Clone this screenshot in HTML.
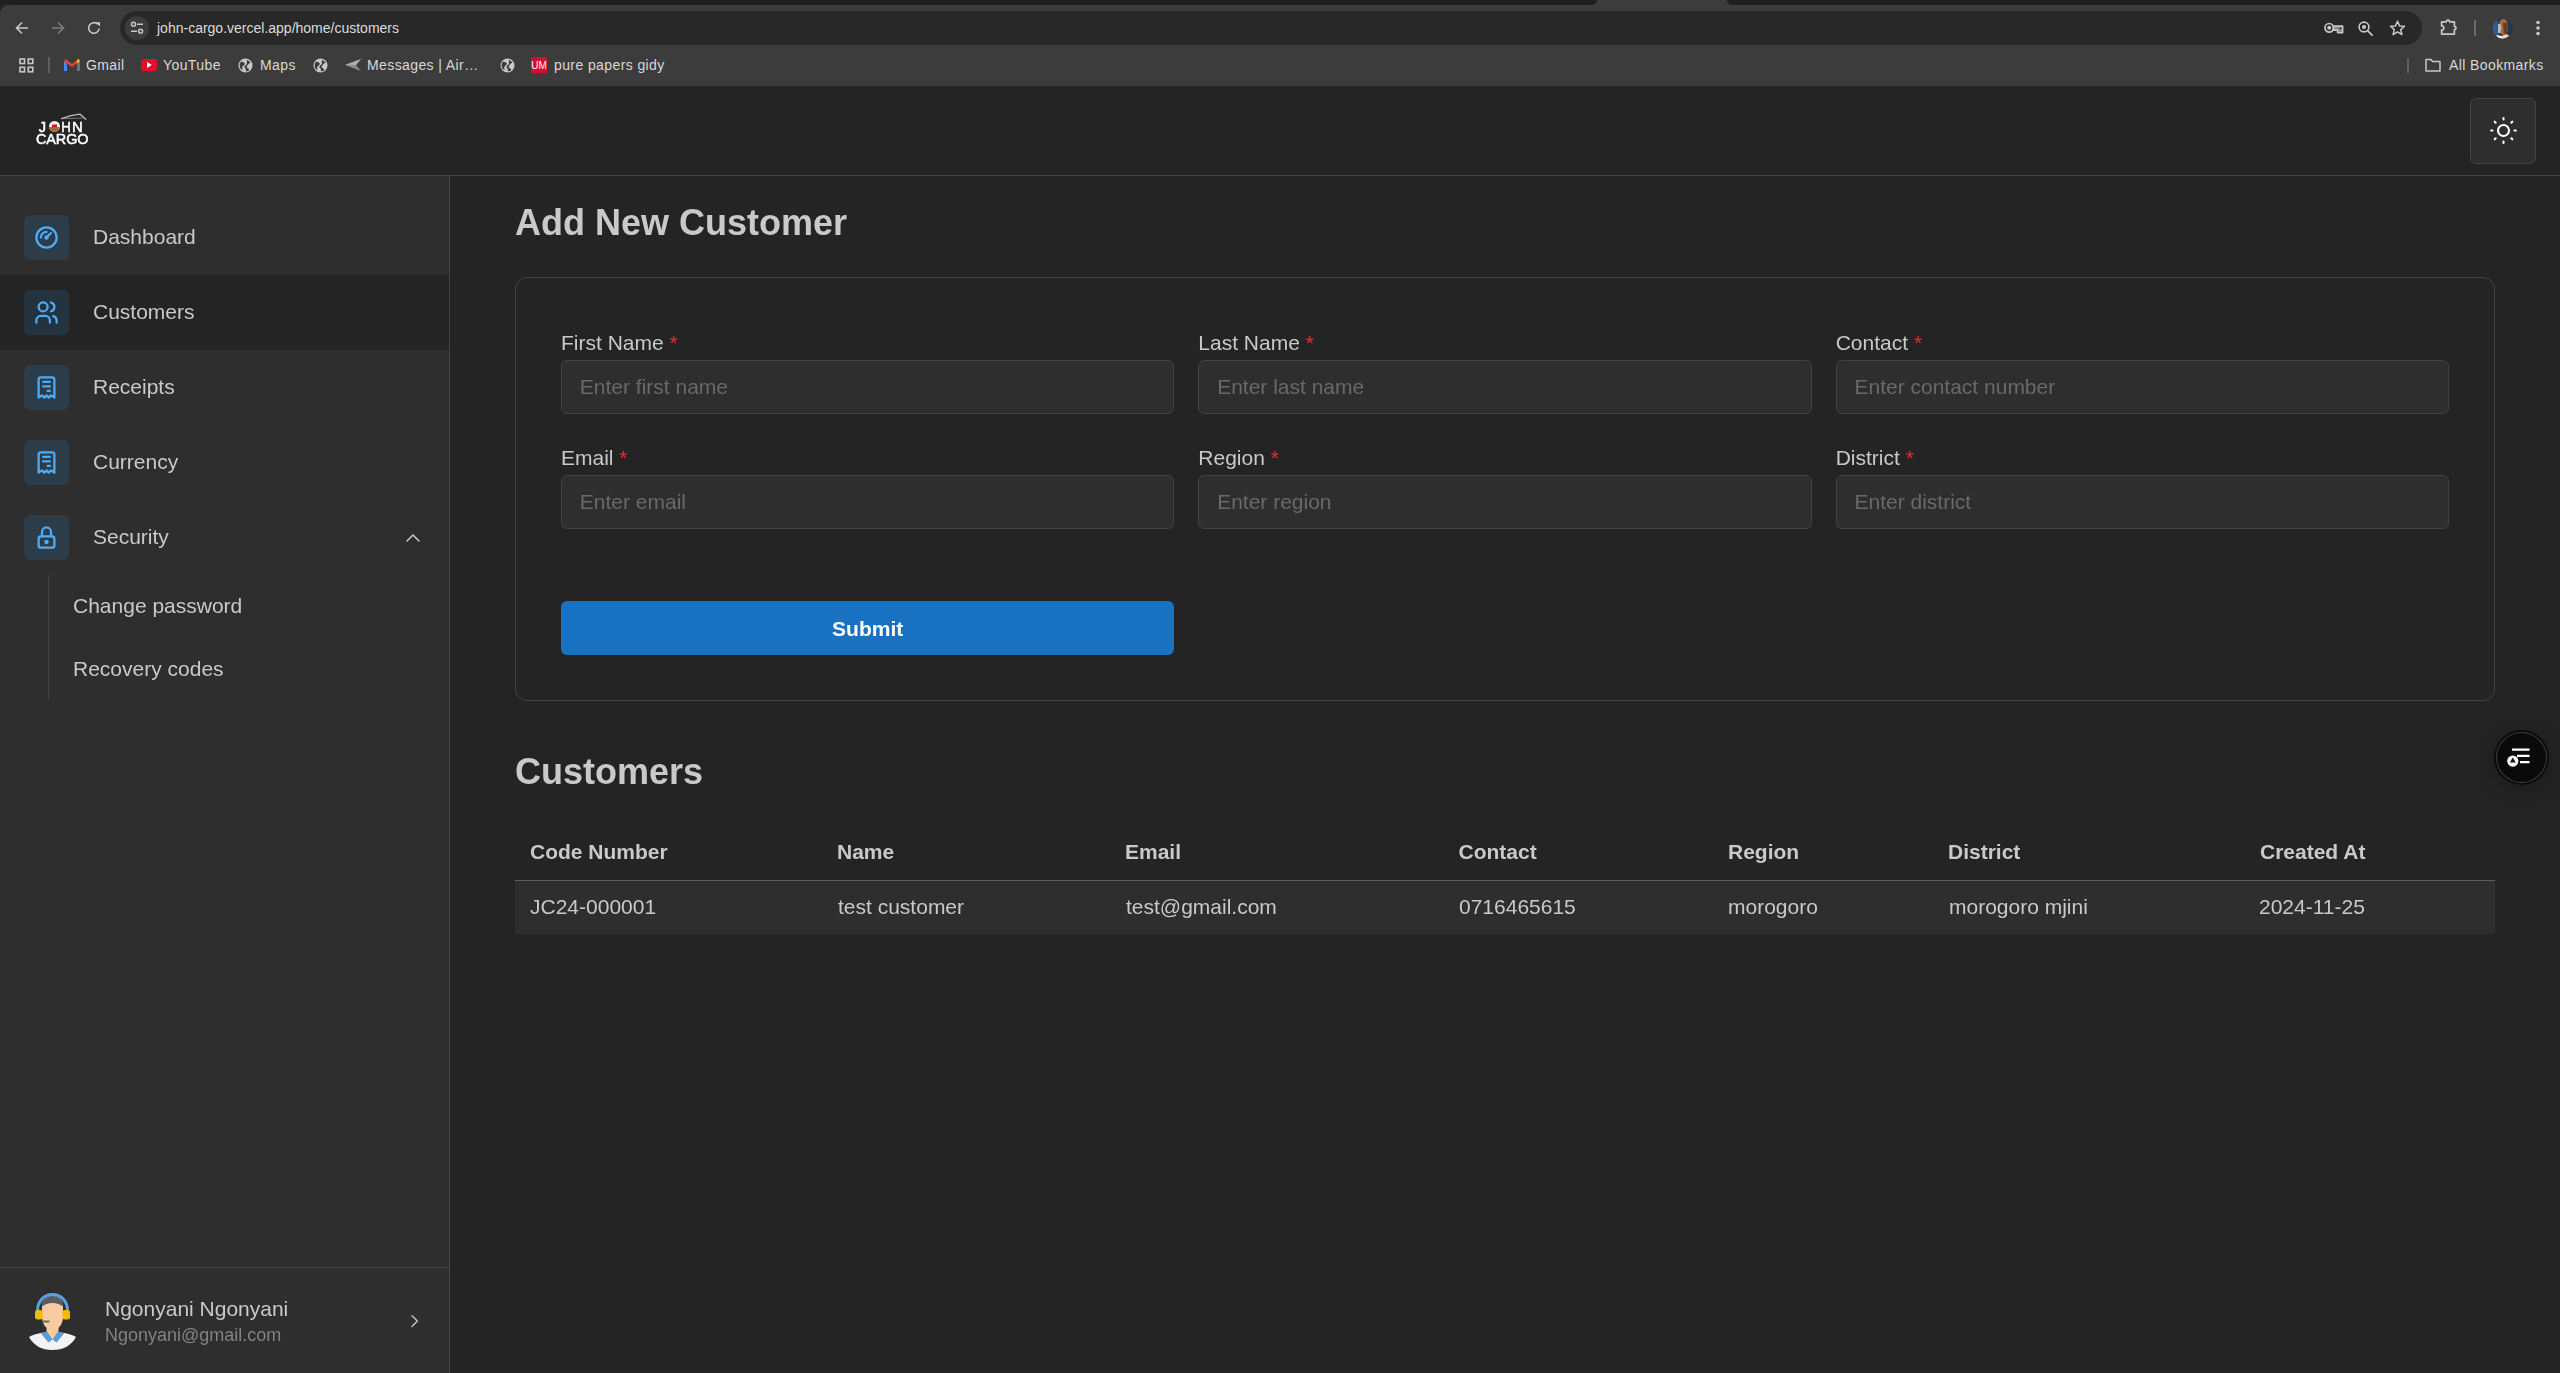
<!DOCTYPE html>
<html><head><meta charset="utf-8">
<style>
*{box-sizing:border-box;margin:0;padding:0}
html,body{width:2560px;height:1373px;overflow:hidden;background:#242424;font-family:"Liberation Sans",sans-serif;color:#c9c9c9;position:relative}
div,svg{position:absolute}
svg{overflow:visible}
/* browser chrome */
#tabs{left:0;top:0;width:2560px;height:5px;background:#1f2121}
#toolbar{left:0;top:5px;width:2560px;height:81px;background:#3c3c3c;border-top-left-radius:9px}
#omni{left:120px;top:11px;width:2302px;height:34px;background:#282828;border-radius:17px}
#siteinfo{left:125px;top:16px;width:24px;height:24px;border-radius:12px;background:#3c3c3c}
#url{left:157px;top:20px;font-size:14px;line-height:16px;color:#dcdcdc;white-space:nowrap}
.bm{top:57px;font-size:14px;line-height:16px;color:#d8d8d8;letter-spacing:0.4px;white-space:nowrap}
.ci{stroke:#c7c7c7;fill:none}
/* app */
#header{left:0;top:86px;width:2560px;height:90px;background:#242424;border-bottom:1px solid #424242}
#toggle{left:2470px;top:98px;width:66px;height:66px;background:#2e2e2e;border:1px solid #424242;border-radius:6px}
#nav{left:0;top:176px;width:450px;height:1197px;background:#2e2e2e;border-right:1px solid #424242;will-change:transform}
.item{left:0;width:449px;height:75px}
.item.active{background:#242424}
.ti{left:24px;top:15px;width:45px;height:45px;border-radius:6px;background:rgba(34,139,230,0.15)}
.ti svg{left:9px;top:9px;width:27px;height:27px}
.ti svg *{stroke:#4dabf7;fill:none;stroke-width:2;stroke-linecap:round;stroke-linejoin:round}
.lbl{left:93px;top:25.25px;font-size:21px;line-height:24px;color:#c9c9c9;white-space:nowrap}
.sub{left:73px;font-size:21px;line-height:24px;color:#c9c9c9;white-space:nowrap}
#subline{left:48px;top:399px;width:1px;height:125px;background:#424242}
#footer{left:0;top:1091px;width:449px;height:106px;border-top:1px solid #424242}
#main{left:450px;top:176px;width:2110px;height:1197px;will-change:transform}
.h2{font-size:36px;line-height:42px;font-weight:700;color:#c9c9c9;white-space:nowrap}
.card{left:65px;top:101px;width:1980px;height:424px;border:1px solid #424242;border-radius:12px}
.flbl{font-size:21px;line-height:24px;color:#c9c9c9;white-space:nowrap}
.flbl b{color:#e03131;font-weight:400}
.inp{width:613.33px;height:54px;background:#2e2e2e;border:1px solid #424242;border-radius:6px;font-size:21px;color:#696969;padding-left:17.8px;line-height:52px;white-space:nowrap}
.btn{width:613.33px;height:54px;background:#1971c2;border-radius:6px;font-size:21px;font-weight:700;color:#fff;text-align:center;line-height:56px}
.th{top:664px;font-size:21px;line-height:24px;font-weight:700;color:#c9c9c9;white-space:nowrap}
.td{top:719px;font-size:21px;line-height:24px;color:#c9c9c9;white-space:nowrap}
#thline{left:65px;top:704px;width:1980px;height:1px;background:#5c5c5c}
#row{left:65px;top:705px;width:1980px;height:53px;background:#2e2e2e}
#fab{will-change:transform;left:2493.5px;top:729.5px;width:55px;height:55px;border-radius:27.5px;background:#0a0a0a;box-shadow:inset 0 0 0 2px #0a0a0a,inset 0 0 0 3px #3e3e3e,0 4px 20px rgba(0,0,0,0.3)}
</style></head><body>
<div id="tabs"></div>
<div id="toolbar"></div>
<div style="left:1560px;top:0;width:200px;height:5px;background:#3c3c3c"></div>
<div style="left:1540px;top:0;width:57px;height:5px;background:#1f2121;border-bottom-right-radius:5px"></div>
<div style="left:1727px;top:0;width:57px;height:5px;background:#1f2121;border-bottom-left-radius:5px"></div>
<!-- nav buttons -->
<svg style="left:14px;top:20px" width="16" height="16" viewBox="0 0 16 16"><path class="ci" stroke-width="1.6" d="M14 8H3.5M8 2.5L2.5 8 8 13.5"/></svg>
<svg style="left:50px;top:20px" width="16" height="16" viewBox="0 0 16 16"><path stroke="#7c7c7c" fill="none" stroke-width="1.6" d="M2 8h10.5M8 2.5L13.5 8 8 13.5"/></svg>
<svg style="left:86px;top:20px" width="16" height="16" viewBox="0 0 16 16"><path class="ci" stroke-width="1.6" d="M13.2 8.5A5.3 5.3 0 1 1 11.6 4.1"/><path fill="#c7c7c7" d="M9.6 2.2h4.4v4.4z"/></svg>
<div id="omni"></div>
<div id="siteinfo"></div>
<svg style="left:130px;top:21px" width="14" height="14" viewBox="0 0 14 14"><circle class="ci" stroke-width="1.5" cx="3.5" cy="3.2" r="2"/><path class="ci" stroke-width="1.6" d="M7 3.2h6M1 10.3h6"/><circle class="ci" stroke-width="1.5" cx="10.6" cy="10.3" r="2"/></svg>
<div id="url">john-cargo.vercel.app/home/customers</div>
<!-- right omnibox icons -->
<svg style="left:2324px;top:22px" width="20" height="12" viewBox="0 0 20 12"><circle class="ci" stroke-width="1.7" cx="5.2" cy="5.8" r="4.3"/><circle fill="#c7c7c7" cx="5.2" cy="5.8" r="2"/><path fill="#8c8c8c" stroke="#c7c7c7" stroke-width="1.6" stroke-linejoin="round" d="M9.4 4.1h9.2v6.6h-5V8.2H9.4z"/><rect x="15.6" y="5.6" width="1.6" height="1.6" fill="#1e1e1e"/></svg>
<svg style="left:2358px;top:21px" width="16" height="15" viewBox="0 0 16 15"><circle class="ci" stroke-width="1.6" cx="6" cy="6" r="4.9"/><circle fill="#c7c7c7" cx="6" cy="6" r="2.1"/><path class="ci" stroke-width="1.6" d="M9.6 9.6l5 5"/></svg>
<svg style="left:2389px;top:20px" width="17" height="16" viewBox="0 0 17 16"><path class="ci" stroke-width="1.5" stroke-linejoin="round" d="M8.5 1.3l2 4.6 5 .4-3.8 3.3 1.2 4.9-4.4-2.6-4.4 2.6 1.2-4.9L1.5 6.3l5-.4z"/></svg>
<svg style="left:2440px;top:19px" width="18" height="17" viewBox="0 0 18 17"><path class="ci" stroke-width="1.7" stroke-linejoin="round" d="M1.6 2.9H6.2A1.7 1.7 0 0 1 9.6 2.9H14.4V7.3A1.6 1.6 0 0 1 14.4 10.5V15.1H1.6V11.2A2.2 2.2 0 0 0 1.6 6.8Z"/></svg>
<div style="left:2474px;top:20px;width:2px;height:16px;background:#6a6a6a"></div>
<svg style="left:2492px;top:18px" width="21" height="21" viewBox="0 0 21 21"><defs><clipPath id="av"><circle cx="10.5" cy="10.5" r="10"/></clipPath></defs><g clip-path="url(#av)"><rect width="21" height="21" fill="#22384f"/><path fill="#355b8e" d="M0 4l6-2v19H0z"/><path fill="#f0f0f0" d="M3 21l2-4 5 1 2 3z"/><path fill="#f5d2ad" d="M10 18l4-2 4 2 1 3h-9z"/><path fill="#a4663a" d="M7 6c0-3 2-5 4.5-5S15.5 3 15.5 6v6c0 3-2 5-4 5s-4-2-4.5-5z"/><path fill="#6a3a22" d="M11 5h4v10l-3 1z"/><path fill="#b8b8b8" d="M6 6h2.5l1 3-1 6H6z"/></g></svg>
<svg style="left:2535px;top:20px" width="6" height="17" viewBox="0 0 6 17"><circle fill="#c7c7c7" cx="3" cy="2.5" r="1.8"/><circle fill="#c7c7c7" cx="3" cy="8" r="1.8"/><circle fill="#c7c7c7" cx="3" cy="13.6" r="1.8"/></svg>
<!-- bookmarks -->
<svg style="left:19px;top:58px" width="15" height="15" viewBox="0 0 15 15"><g class="ci" stroke-width="1.6"><rect x="1" y="1" width="4.5" height="4.5"/><rect x="9.3" y="1" width="4.5" height="4.5"/><rect x="1" y="9.3" width="4.5" height="4.5"/><rect x="9.3" y="9.3" width="4.5" height="4.5"/></g></svg>
<div style="left:48px;top:57px;width:2px;height:16px;background:#5f5f5f"></div>
<svg style="left:64px;top:59px" width="16" height="12" viewBox="0 0 16 12"><path fill="#4285f4" d="M0 2v10h3V4.5z"/><path fill="#6f7378" d="M13 4.5V12h3V2z"/><path fill="#ea4335" d="M0 2l8 6 8-6-1.5-2L8 5 1.5 0z"/><path fill="#fbbc04" d="M13 4.5L16 2l-1.5-2L13 1z"/></svg>
<div class="bm" style="left:86px">Gmail</div>
<svg style="left:141px;top:59px" width="16" height="12" viewBox="0 0 16 12"><rect fill="#e0102b" x="0" y="0" width="16" height="12" rx="3"/><path fill="#fff" d="M6 3v6l4.8-3z"/></svg>
<div class="bm" style="left:163px">YouTube</div>
<svg style="left:238px;top:58px" width="15" height="15" viewBox="0 0 15 15"><circle fill="#c7c7c7" cx="7.5" cy="7.5" r="7"/><path fill="#3c3c3c" d="M3 3.5c1.5 0 2.5 1 3.5 1.5S6 7.5 5 8 4 10 4.5 11.5 2 11 1.8 9A6 6 0 0 1 3 3.5zM9 2c1.5.5 3 1.5 3.5 3-1 0-2 .5-2.5 1.5S8 8 9 9.5s2.5 1 2 3c-1 .8-2.5 1.2-3 .5s.5-2-1-3 .5-3 1.5-3.5S8.5 3 9 2z"/></svg>
<div class="bm" style="left:260px">Maps</div>
<svg style="left:313px;top:58px" width="15" height="15" viewBox="0 0 15 15"><circle fill="#c7c7c7" cx="7.5" cy="7.5" r="7"/><path fill="#3c3c3c" d="M3 3.5c1.5 0 2.5 1 3.5 1.5S6 7.5 5 8 4 10 4.5 11.5 2 11 1.8 9A6 6 0 0 1 3 3.5zM9 2c1.5.5 3 1.5 3.5 3-1 0-2 .5-2.5 1.5S8 8 9 9.5s2.5 1 2 3c-1 .8-2.5 1.2-3 .5s.5-2-1-3 .5-3 1.5-3.5S8.5 3 9 2z"/></svg>
<svg style="left:345px;top:59px" width="16" height="12" viewBox="0 0 16 12"><path fill="#8a8a8a" d="M0 6L16 0 11 6 16 12z"/><path fill="#b0b0b0" d="M0 6h11l5-6z"/></svg>
<div class="bm" style="left:367px">Messages | Air…</div>
<svg style="left:500px;top:58px" width="15" height="15" viewBox="0 0 15 15"><circle fill="#c7c7c7" cx="7.5" cy="7.5" r="7"/><path fill="#3c3c3c" d="M3 3.5c1.5 0 2.5 1 3.5 1.5S6 7.5 5 8 4 10 4.5 11.5 2 11 1.8 9A6 6 0 0 1 3 3.5zM9 2c1.5.5 3 1.5 3.5 3-1 0-2 .5-2.5 1.5S8 8 9 9.5s2.5 1 2 3c-1 .8-2.5 1.2-3 .5s.5-2-1-3 .5-3 1.5-3.5S8.5 3 9 2z"/></svg>
<svg style="left:531px;top:57px" width="16" height="16" viewBox="0 0 16 16"><rect fill="#d3102c" width="16" height="16"/><text x="8" y="12" font-family="Liberation Sans" font-size="10" fill="#fff" text-anchor="middle">UM</text></svg>
<div class="bm" style="left:554px">pure papers gidy</div>
<div style="left:2407px;top:58px;width:2px;height:15px;background:#5f5f5f"></div>
<svg style="left:2425px;top:58px" width="16" height="14" viewBox="0 0 16 14"><path class="ci" stroke-width="1.5" stroke-linejoin="round" d="M1 1.5h5l1.5 2H15v9.5H1z"/></svg>
<div class="bm" style="left:2449px">All Bookmarks</div>

<!-- APP HEADER -->
<div id="header"></div>
<svg id="logo" style="left:30px;top:105px;will-change:transform" width="70" height="45" viewBox="0 0 70 45">
  <g fill="#fff" stroke="#fff" stroke-width="0.5" font-family="Liberation Sans" font-weight="400">
    <text x="8.8" y="26.5" font-size="14.6">J</text>
    <text x="31.2" y="26.5" font-size="14.6" textLength="9.6" lengthAdjust="spacingAndGlyphs">H</text>
    <text x="42" y="26.5" font-size="14.6" textLength="10.8" lengthAdjust="spacingAndGlyphs">N</text>
    <text x="6" y="38.9" font-size="14.4" textLength="52.5" lengthAdjust="spacing">CARGO</text>
  </g>
  <clipPath id="lc"><circle cx="24.5" cy="21.4" r="5.5"/></clipPath>
  <g clip-path="url(#lc)"><rect x="18" y="15" width="13" height="13" fill="#f1f4f8"/><rect x="18" y="22" width="13" height="6" fill="#a86a40"/><rect x="22" y="19.5" width="5" height="2.6" fill="#d8101e"/></g>
  <path stroke="#bdbdbd" fill="none" stroke-width="1.3" stroke-linecap="round" d="M31.5 13.6C37 11.5 44 9.7 50 9.2l5.8 5"/>
  <path stroke="#8a8a8a" fill="none" stroke-width="0.8" d="M33 13.6l20-.5"/>
</svg>
<div id="toggle"><svg style="left:15.5px;top:14.5px" width="33" height="33" viewBox="0 0 24 24"><g stroke="#fff" fill="none" stroke-width="1.5" stroke-linecap="round"><circle cx="12" cy="12" r="4"/><path d="M3 12h1m8-9v1m8 8h1m-9 8v1m-6.4-15.4l.7.7m12.1-.7l-.7.7m0 11.4l.7.7m-12.1-.7l-.7.7"/></g></svg></div>

<!-- NAV -->
<div id="nav">
  <div class="item" style="top:24px"><div class="ti"><svg viewBox="0 0 24 24"><circle cx="12" cy="12" r="9"/><circle cx="12" cy="12" r="1"/><path d="M13.41 10.59l2.59-2.59M7 12a5 5 0 0 1 5-5"/></svg></div><div class="lbl">Dashboard</div></div>
  <div class="item active" style="top:99px"><div class="ti"><svg viewBox="0 0 24 24"><circle cx="9" cy="7" r="4"/><path d="M3 21v-2a4 4 0 0 1 4-4h4a4 4 0 0 1 4 4v2M16 3.13a4 4 0 0 1 0 7.75M21 21v-2a4 4 0 0 0-3-3.85"/></svg></div><div class="lbl">Customers</div></div>
  <div class="item" style="top:174px"><div class="ti"><svg viewBox="0 0 24 24"><path d="M5 21v-16a2 2 0 0 1 2-2h10a2 2 0 0 1 2 2v16l-3-2l-2 2l-2-2l-2 2l-2-2l-3 2m4-14h6m-6 4h6m-2 4h2"/></svg></div><div class="lbl">Receipts</div></div>
  <div class="item" style="top:249px"><div class="ti"><svg viewBox="0 0 24 24"><path d="M5 21v-16a2 2 0 0 1 2-2h10a2 2 0 0 1 2 2v16l-3-2l-2 2l-2-2l-2 2l-2-2l-3 2m4-14h6m-6 4h6m-2 4h2"/></svg></div><div class="lbl">Currency</div></div>
  <div class="item" style="top:324px"><div class="ti"><svg viewBox="0 0 24 24"><path d="M5 13a2 2 0 0 1 2-2h10a2 2 0 0 1 2 2v6a2 2 0 0 1-2 2h-10a2 2 0 0 1-2-2v-6z"/><circle cx="12" cy="16" r="1"/><path d="M8 11v-4a4 4 0 1 1 8 0v4"/></svg></div><div class="lbl">Security</div>
    <svg style="left:401px;top:26px" width="24" height="24" viewBox="0 0 24 24"><path d="M6 15l6-6l6 6" stroke="#c9c9c9" fill="none" stroke-width="1.5" stroke-linecap="round" stroke-linejoin="round"/></svg></div>
  <div id="subline"></div>
  <div class="sub" style="top:418px">Change password</div>
  <div class="sub" style="top:481px">Recovery codes</div>
  <div id="footer">
    <svg style="left:27px;top:24px" width="52" height="60" viewBox="0 0 52 60">
      <path fill="#f2f3f7" d="M2 45c6-3.5 14-5 23.5-5s17.5 1.5 23.5 5c-5 9-13 13-23.5 13S7 54 2 45z"/>
      <path fill="#5b9bd5" d="M14 41.5l7-2.5 4.5 8.5-4 3zM37 41.5l-7-2.5-4.5 8.5 4 3z"/>
      <path fill="#f9cba0" d="M19.5 33h12v6l-6 8-6-8z"/>
      <path fill="#f9cba0" d="M15 14c0-6 4-10 10.5-10S36 8 36 14v11c0 7-4.5 13-10.5 13S15 32 15 25z"/>
      <path fill="#575c66" d="M14.5 15c0-7 4.5-11 11-11s11 4 11 11c-3-2.5-7-4-11-4s-8 1.5-11 4z"/>
      <path stroke="#5aa0e6" fill="none" stroke-width="3" d="M10.5 19c0-10 6.5-16.5 15-16.5s15 6.5 15 16.5"/>
      <rect fill="#f5b800" x="8" y="18" width="7.5" height="9.5" rx="2.5"/>
      <rect fill="#f5b800" x="35.5" y="18" width="7.5" height="9.5" rx="2.5"/>
      <path stroke="#6a6a6a" stroke-width="2" d="M15.5 29.5h7"/>
    </svg>
    <div style="left:105px;top:29px;font-size:21px;line-height:24px;color:#c9c9c9;white-space:nowrap">Ngonyani Ngonyani</div>
    <div style="left:105px;top:57px;font-size:18px;line-height:21px;color:#828282;white-space:nowrap">Ngonyani@gmail.com</div>
        <svg style="left:408px;top:44px" width="12" height="18" viewBox="0 0 12 18"><path d="M4 3.7l5.4 5.4-5.4 5.4" stroke="#c9c9c9" fill="none" stroke-width="1.35" stroke-linecap="round" stroke-linejoin="round"/></svg>
  </div>
</div>

<!-- MAIN -->
<div id="main">
  <div class="h2" style="left:65px;top:26px">Add New Customer</div>
  <div class="card"></div>
  <div class="flbl" style="left:111px;top:155px">First Name <b>*</b></div>
  <div class="flbl" style="left:748.33px;top:155px">Last Name <b>*</b></div>
  <div class="flbl" style="left:1385.67px;top:155px">Contact <b>*</b></div>
  <div class="inp" style="left:111px;top:184px">Enter first name</div>
  <div class="inp" style="left:748.33px;top:184px">Enter last name</div>
  <div class="inp" style="left:1385.67px;top:184px">Enter contact number</div>
  <div class="flbl" style="left:111px;top:270px">Email <b>*</b></div>
  <div class="flbl" style="left:748.33px;top:270px">Region <b>*</b></div>
  <div class="flbl" style="left:1385.67px;top:270px">District <b>*</b></div>
  <div class="inp" style="left:111px;top:299px">Enter email</div>
  <div class="inp" style="left:748.33px;top:299px">Enter region</div>
  <div class="inp" style="left:1385.67px;top:299px">Enter district</div>
  <div class="btn" style="left:111px;top:425px">Submit</div>
  <div class="h2" style="left:65px;top:575px">Customers</div>
  <div id="thline"></div>
  <div id="row"></div>
  <div class="th" style="left:80px">Code Number</div>
  <div class="th" style="left:387px">Name</div>
  <div class="th" style="left:675px">Email</div>
  <div class="th" style="left:1008.5px">Contact</div>
  <div class="th" style="left:1278px">Region</div>
  <div class="th" style="left:1498px">District</div>
  <div class="th" style="left:1810px">Created At</div>
  <div class="td" style="left:80px">JC24-000001</div>
  <div class="td" style="left:388px">test customer</div>
  <div class="td" style="left:676px">test@gmail.com</div>
  <div class="td" style="left:1009px">0716465615</div>
  <div class="td" style="left:1278px">morogoro</div>
  <div class="td" style="left:1499px">morogoro mjini</div>
  <div class="td" style="left:1809px">2024-11-25</div>
</div>
<div id="fab">
  <svg style="left:6.5px;top:10px" width="32" height="32" viewBox="0 0 32 32"><path stroke="#fff" stroke-width="2.2" d="M11 9.6h17.5M16 15.9h12.5M19 22.1h9.5"/><circle fill="#fff" cx="11.8" cy="21.1" r="5.6"/><path fill="#111" d="M11.8 17.6l3 4.8h-6z"/></svg>
</div>
</body></html>
